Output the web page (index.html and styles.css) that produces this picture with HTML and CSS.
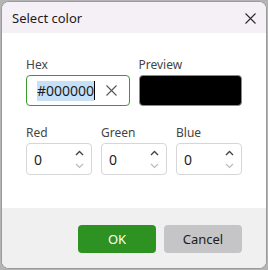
FILE: index.html
```html
<!DOCTYPE html>
<html lang="en">
<head>
    <meta charset="UTF-8">
    <title>Select color</title>
    <link rel="stylesheet" href="styles.css">
</head>
<body>
    <div class="dialog">
        <div class="titlebar">
            <span class="title">Select color</span>
            <svg class="close" width="11" height="11" viewBox="0 0 11 11">
                <path d="M0.5 0.5 L10.5 10.5 M10.5 0.5 L0.5 10.5" stroke="#2b2b2b" stroke-width="1.1" fill="none"/>
            </svg>
        </div>

        <div class="content">
            <div class="row two">
                <div class="field">
                    <label>Hex</label>
                    <div class="hex-input">
                        <span class="value"><span class="sel">#000000</span><span class="caret"></span></span>
                        <svg class="clear" width="11" height="11" viewBox="0 0 11 11">
                            <path d="M0.5 0.5 L10.5 10.5 M10.5 0.5 L0.5 10.5" stroke="#555" stroke-width="1.1" fill="none"/>
                        </svg>
                    </div>
                </div>
                <div class="field">
                    <label>Preview</label>
                    <div class="preview"></div>
                </div>
            </div>

            <div class="row three">
                <div class="field">
                    <label>Red</label>
                    <div class="num-input">
                        <span class="value">0</span>
                        <div class="spin">
                            <svg width="9" height="6" viewBox="0 0 9 6"><path d="M1 5 L4.5 1.5 L8 5" stroke="#444" stroke-width="1.4" fill="none"/></svg>
                            <svg width="9" height="6" viewBox="0 0 9 6"><path d="M1 1 L4.5 4.5 L8 1" stroke="#bbb" stroke-width="1.2" fill="none"/></svg>
                        </div>
                    </div>
                </div>
                <div class="field">
                    <label>Green</label>
                    <div class="num-input">
                        <span class="value">0</span>
                        <div class="spin">
                            <svg width="9" height="6" viewBox="0 0 9 6"><path d="M1 5 L4.5 1.5 L8 5" stroke="#444" stroke-width="1.4" fill="none"/></svg>
                            <svg width="9" height="6" viewBox="0 0 9 6"><path d="M1 1 L4.5 4.5 L8 1" stroke="#bbb" stroke-width="1.2" fill="none"/></svg>
                        </div>
                    </div>
                </div>
                <div class="field">
                    <label>Blue</label>
                    <div class="num-input">
                        <span class="value">0</span>
                        <div class="spin">
                            <svg width="9" height="6" viewBox="0 0 9 6"><path d="M1 5 L4.5 1.5 L8 5" stroke="#444" stroke-width="1.4" fill="none"/></svg>
                            <svg width="9" height="6" viewBox="0 0 9 6"><path d="M1 1 L4.5 4.5 L8 1" stroke="#bbb" stroke-width="1.2" fill="none"/></svg>
                        </div>
                    </div>
                </div>
            </div>
        </div>

        <div class="footer">
            <button class="ok">OK</button>
            <button class="cancel">Cancel</button>
        </div>
    </div>
</body>
</html>
```

FILE: styles.css
```css
* {
    box-sizing: border-box;
}

body {
    margin: 0;
    background: #b4b4b4;
    font-family: 'Noto Sans', 'Open Sans', sans-serif;
    color: #1c1c1c;
}

.dialog {
    margin: 1px;
    height: 268px;
    border: 1px solid #9a9a9a;
    border-radius: 8px;
    overflow: hidden;
    display: flex;
    flex-direction: column;
    background: #fff;
}

.titlebar {
    height: 31px;
    background: #f4f0f6;
    display: flex;
    align-items: center;
    justify-content: space-between;
    padding: 0 10px 0 10px;
}

.title {
    font-size: 13px;
}

.close {
    margin-top: 1px;
}

.content {
    flex: 1;
    padding: 24px 24px 0 24px;
}

.row {
    display: grid;
    gap: 9px;
}

.row.two {
    grid-template-columns: 1fr 1fr;
}

.row.three {
    grid-template-columns: 1fr 1fr 1fr;
    margin-top: 19px;
}

.field label {
    display: block;
    font-size: 12px;
    line-height: 16px;
    color: #454545;
    margin-bottom: 2px;
}

.hex-input {
    height: 31px;
    border: 1px solid #3a9a2c;
    border-radius: 4px;
    display: flex;
    align-items: center;
    justify-content: space-between;
    padding: 0 12px 0 10px;
}

.value {
    font-size: 14px;
    display: flex;
    align-items: center;
}

.sel {
    background: #c6e0f7;
    line-height: 20px;
}

.caret {
    width: 1px;
    height: 19px;
    background: #000;
}

.preview {
    height: 31px;
    background: #000;
    border: 1px solid #8a8a8a;
    border-radius: 4px;
}

.num-input {
    height: 32px;
    border: 1px solid #d6d6d6;
    border-radius: 4px;
    display: flex;
    align-items: center;
    justify-content: space-between;
    padding: 0 7px 0 7px;
}

.spin {
    display: flex;
    flex-direction: column;
    gap: 7px;
}

.footer {
    height: 60px;
    background: #f0f0f0;
    display: flex;
    justify-content: flex-end;
    align-items: flex-start;
    gap: 8px;
    padding: 17px 24px 0 0;
}

button {
    width: 78px;
    height: 28px;
    border: none;
    border-radius: 4px;
    font-family: 'Noto Sans', 'Open Sans', sans-serif;
    font-size: 13px;
}

.ok {
    background: #2e9222;
    color: #fff;
}

.cancel {
    background: #c5c5c7;
    color: #1c1c1c;
}
```
